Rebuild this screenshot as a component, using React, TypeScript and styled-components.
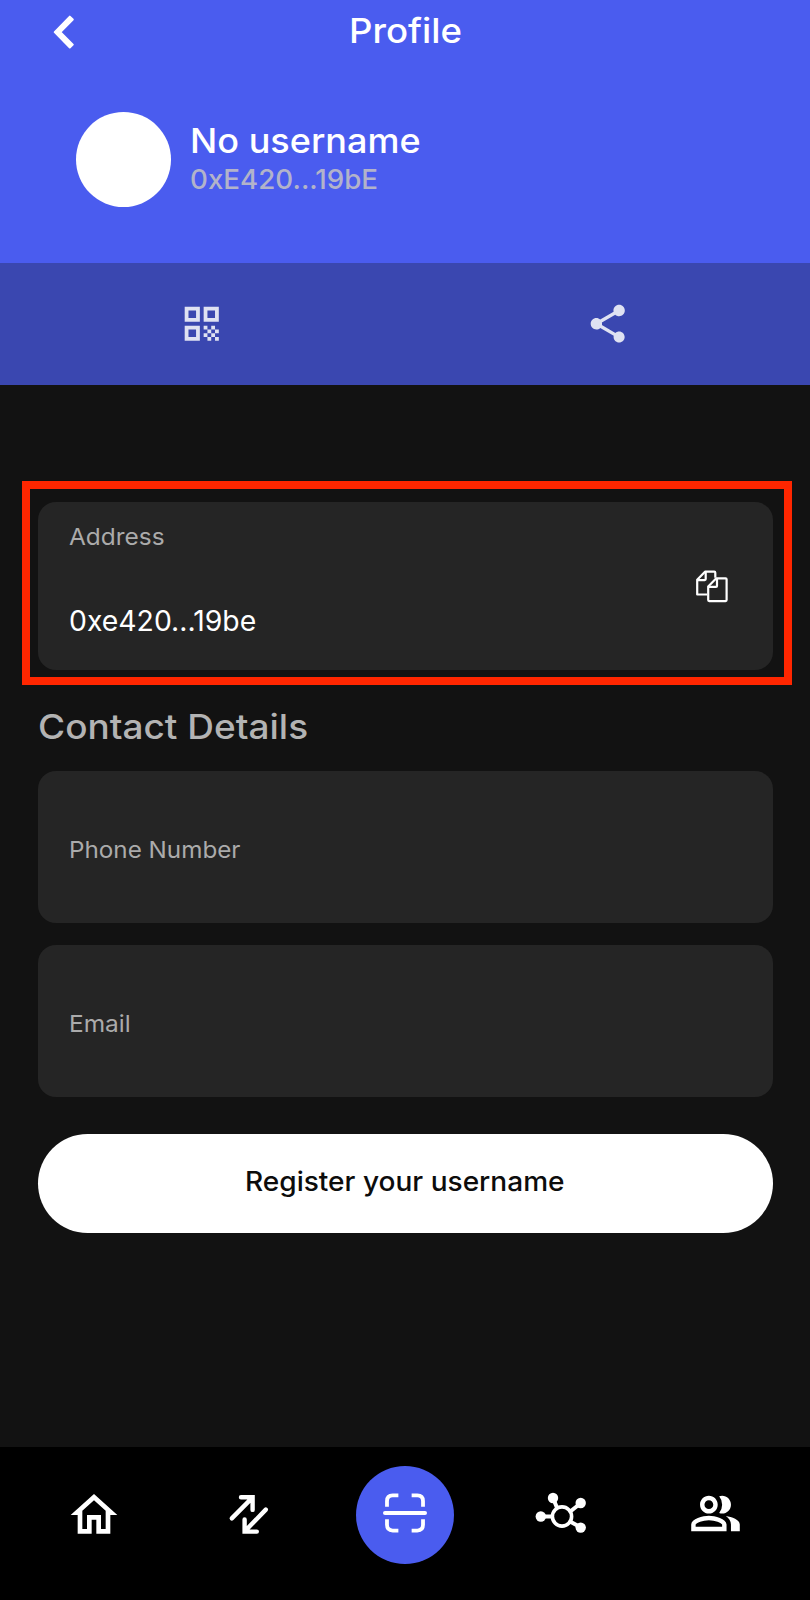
import React from 'react';
import styled, { createGlobalStyle } from 'styled-components';
import { MdQrCode, MdShare, MdOutlineHome, MdOutlinePeopleAlt } from 'react-icons/md';

const GlobalStyle = createGlobalStyle`
  * { box-sizing: border-box; }
  body { margin: 0; background: #121212; }
  svg { display: block; flex: none; }
`;

const Screen = styled.div`
  display: flex;
  flex-direction: column;
  width: 810px;
  height: 1600px;
  overflow: hidden;
  background: #121212;
  color: #fff;
  font-family: Inter, 'Liberation Sans', sans-serif;
`;

const Text = styled.span<{
  $size: number;
  $line: number;
  $stretch?: number;
  $centered?: boolean;
  $weight?: number;
  $color?: string;
}>`
  display: block;
  margin: 0;
  white-space: nowrap;
  font-size: ${(p) => p.$size}px;
  line-height: ${(p) => p.$line}px;
  font-weight: ${(p) => p.$weight ?? 400};
  color: ${(p) => p.$color ?? '#fff'};
  transform: scaleX(${(p) => p.$stretch ?? 1});
  transform-origin: ${(p) => (p.$centered ? 'center' : 'left')};
`;

const Header = styled.header`
  height: 263px;
  flex: none;
  background: #4a5cef;
`;

const TitleBar = styled.div`
  display: grid;
  grid-template-columns: 1fr auto 1fr;
  align-items: center;
  height: 62px;
  padding: 0 50px;
`;

const Account = styled.div`
  display: flex;
  gap: 19px;
  padding: 49.5px 0 0 75.5px;
`;

const Avatar = styled.div`
  width: 95px;
  height: 95px;
  border-radius: 50%;
  background: #fff;
`;

const AccountText = styled.div`
  padding-top: 8.5px;
`;

const Actions = styled.div`
  display: grid;
  grid-template-columns: 1fr 1fr;
  place-items: center;
  flex: none;
  height: 121.5px;
  padding: 0 0 0.5px;
  background: #3a47b0;
  color: #dfe2f2;
`;

const QrIcon = styled(MdQrCode)`
  margin-right: 1.5px;
`;

const Content = styled.main`
  flex: 1;
  padding: 96.5px 18px 0 22px;
`;

const Highlight = styled.section`
  height: 203.5px;
  padding: 12.5px 11px 0 7.5px;
  border: 8.5px solid #ff2600;
`;

const Card = styled.div<{ $height: number }>`
  display: flex;
  align-items: center;
  justify-content: space-between;
  height: ${(p) => p.$height}px;
  padding: 0 45.5px 0 31px;
  border-radius: 18px;
  background: #252525;
`;

const AddressText = styled.div`
  display: flex;
  flex-direction: column;
  gap: 48px;
  padding-bottom: 12px;
`;

const Details = styled.section`
  display: flex;
  flex-direction: column;
  padding: 21.5px 19.5px 0 16px;
`;

const Fields = styled.div`
  display: grid;
  gap: 22.5px;
  margin: 23px 0 37.5px;
`;

const FieldLabel = styled(Text)`
  padding-top: 6px;
`;

const RegisterButton = styled.button`
  display: flex;
  align-items: center;
  justify-content: center;
  height: 99px;
  padding: 0 0 3.5px;
  border: 0;
  border-radius: 50px;
  background: #fff;
  font-family: inherit;
`;

const Nav = styled.nav`
  display: grid;
  grid-template-columns: repeat(5, 155.5px);
  justify-content: center;
  align-items: center;
  justify-items: center;
  flex: none;
  height: 153.5px;
  padding-bottom: 17px;
  background: #000;
`;

const ScanButton = styled.div`
  display: grid;
  place-items: center;
  width: 98.5px;
  height: 98.5px;
  padding-bottom: 4px;
  border-radius: 50%;
  background: #4a5cef;
`;

const BackIcon = () => (
  <svg width="28" height="36" viewBox="0 0 28 36" fill="#fff" stroke="#fff" strokeWidth="2" strokeLinejoin="round">
    <path d="M19.8 3.6 22.8 6.5 10.4 19.1 22.8 31.6 19.8 34.5 4.7 19.1z" />
  </svg>
);

const CopyIcon = () => (
  <svg width="32" height="34" viewBox="0 -1.5 32 34" fill="none" stroke="#fff" strokeWidth="2.2" strokeLinejoin="round">
    <path d="M11 24H1.2V9.3L9 1.2h9.3q1 0 1 1v5" />
    <path d="M9.7 1.2V8.6q0 1-1 1H1.2" />
    <path d="M20.3 7.8h9.3q1 0 1 1v20.8q0 1-1 1H13.2q-1 0-1-1V16z" />
    <path d="M21 7.8v7.6q0 1-1 1h-7.8" />
  </svg>
);

const TransferIcon = () => (
  <svg width="44" height="44" viewBox="0.6 0 44 44" fill="none" stroke="#fff" strokeWidth="4.4" strokeLinecap="round" strokeLinejoin="miter">
    <path d="M4.4 25.4 25 4.6M13.6 4.3h11.6v12.6" />
    <path d="M38.4 16.6 17.4 38.3M17.2 26.4v12.2h12.2" />
  </svg>
);

const ScanIcon = () => (
  <svg width="46" height="42" viewBox="0 0 46 42" fill="none" stroke="#fff" strokeWidth="4">
    <path d="M4 14.5V8.5q0-6 6-6h6M30 2.5h6q6 0 6 6v6M42 27.5v6q0 6-6 6h-6M16 39.5h-6q-6 0-6-6v-6" transform="translate(1.2 1.1) scale(.948)" />
    <path d="M3 21h40" strokeLinecap="round" />
  </svg>
);

const HubIcon = () => (
  <svg width="52" height="46" viewBox="0 0 52 46" stroke="#fff">
    <path d="M5.5 24.5H17M18 6l4.5 11M46 11 34 20.5M46 35.5l-11-6" strokeWidth="4" />
    <circle cx="27" cy="24.5" r="9.6" fill="none" strokeWidth="3.6" />
    <g fill="#fff" stroke="none">
      <circle cx="5.8" cy="24.5" r="5.2" />
      <circle cx="18" cy="6" r="5.2" />
      <circle cx="45.7" cy="11" r="5.2" />
      <circle cx="45.7" cy="35.6" r="5.2" />
    </g>
  </svg>
);

const PeopleIcon = styled(MdOutlinePeopleAlt)`
  margin: 0 1.5px 2px 0;
`;

export default function App() {
  return (
    <Screen>
      <GlobalStyle />
      <Header>
        <TitleBar>
          <BackIcon />
          <Text as="h1" $size={34} $line={40} $stretch={1.076} $weight={500} $centered>Profile</Text>
        </TitleBar>
        <Account>
          <Avatar />
          <AccountText>
            <Text $size={34} $line={42} $stretch={1.06} $weight={500}>No username</Text>
            <Text $size={27.5} $line={34} $stretch={1.008} $weight={500} $color="#b2b3ca">0xE420...19bE</Text>
          </AccountText>
        </Account>
      </Header>
      <Actions>
        <QrIcon size={45.5} />
        <MdShare size={45.5} />
      </Actions>
      <Content>
        <Highlight>
          <Card $height={168}>
            <AddressText>
              <Text $size={23.5} $line={34} $stretch={1.04} $color="#ababab">Address</Text>
              <Text $size={28} $line={38} $stretch={1.013}>0xe420...19be</Text>
            </AddressText>
            <CopyIcon />
          </Card>
        </Highlight>
        <Details>
          <Text as="h2" $size={34} $line={42} $stretch={1.088} $weight={500} $color="#b3b3b3">Contact Details</Text>
          <Fields>
            <Card $height={151.5}>
              <FieldLabel $size={23.5} $line={32} $stretch={1.031} $color="#ababab">Phone Number</FieldLabel>
            </Card>
            <Card $height={151.5}>
              <FieldLabel $size={23.5} $line={32} $stretch={1.04} $color="#ababab">Email</FieldLabel>
            </Card>
          </Fields>
          <RegisterButton>
            <Text $size={27} $line={34} $stretch={1.039} $weight={500} $color="#0c0c0c" $centered>Register your username</Text>
          </RegisterButton>
        </Details>
      </Content>
      <Nav>
        <MdOutlineHome size={56} />
        <TransferIcon />
        <ScanButton>
          <ScanIcon />
        </ScanButton>
        <HubIcon />
        <PeopleIcon size={53} />
      </Nav>
    </Screen>
  );
}
